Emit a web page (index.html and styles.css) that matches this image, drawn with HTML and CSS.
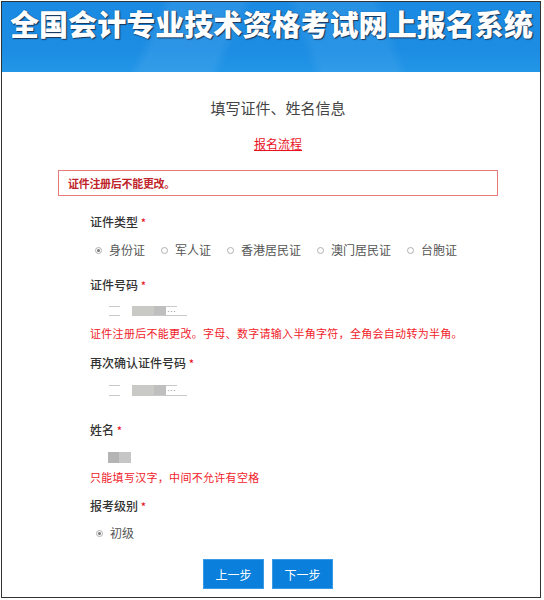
FILE: index.html
```html
<!DOCTYPE html>
<html lang="zh-CN">
<head>
<meta charset="utf-8">
<title>全国会计专业技术资格考试网上报名系统</title>
<link rel="stylesheet" href="styles.css">
</head>
<body>
<div class="frame">
  <header class="banner">
    <h1 class="banner-title">全国会计专业技术资格考试网上报名系统</h1>
  </header>
  <main class="main">
    <h2 class="page-title">填写证件、姓名信息</h2>
    <div class="flow"><a class="flow-link" href="#">报名流程</a></div>
    <div class="alert">证件注册后不能更改。</div>

    <div class="form">
      <div class="label lbl-type">证件类型 <span class="star">*</span></div>
      <div class="radios r-type">
        <span class="opt"><span class="radio checked"></span>身份证</span>
        <span class="opt"><span class="radio"></span>军人证</span>
        <span class="opt"><span class="radio"></span>香港居民证</span>
        <span class="opt"><span class="radio"></span>澳门居民证</span>
        <span class="opt"><span class="radio"></span>台胞证</span>
      </div>

      <div class="label lbl-id">证件号码 <span class="star">*</span></div>
      <div class="mask m-id">
        <span class="seg-a"></span>
        <span class="seg-b"><span class="blk"></span><span class="dots">…</span></span>
      </div>
      <div class="hint h-id">证件注册后不能更改。字母、数字请输入半角字符，全角会自动转为半角。</div>

      <div class="label lbl-id2">再次确认证件号码 <span class="star">*</span></div>
      <div class="mask m-id2">
        <span class="seg-a"></span>
        <span class="seg-b"><span class="blk"></span><span class="dots">…</span></span>
      </div>

      <div class="label lbl-name">姓名 <span class="star">*</span></div>
      <div class="name-mask"><span class="nb1"></span><span class="nb2"></span></div>
      <div class="hint h-name">只能填写汉字，中间不允许有空格</div>

      <div class="label lbl-level">报考级别 <span class="star">*</span></div>
      <div class="radios r-level">
        <span class="opt"><span class="radio checked"></span>初级</span>
      </div>

      <div class="actions">
        <button class="btn" type="button">上一步</button>
        <button class="btn" type="button">下一步</button>
      </div>
    </div>
  </main>
</div>
</body>
</html>
```

FILE: styles.css
```css
html, body {
  margin: 0;
  padding: 0;
  background: #fff;
}
body {
  font-family: "Noto Sans CJK SC", "Noto Sans", sans-serif;
  color: #333;
}
.frame {
  margin: 1px;
  width: 540px;
  height: 597px;
  box-sizing: border-box;
  border: 1px solid #333;
  overflow: hidden;
}
.banner {
  height: 70px;
  background:
    linear-gradient(115deg, rgba(255,255,255,0) 0%, rgba(255,255,255,0) 28%, rgba(255,255,255,0.07) 30%, rgba(255,255,255,0.07) 42%, rgba(255,255,255,0) 44%),
    linear-gradient(70deg, rgba(255,255,255,0) 55%, rgba(255,255,255,0.06) 57%, rgba(255,255,255,0.06) 70%, rgba(255,255,255,0) 72%),
    linear-gradient(180deg, #1a8ae2 0%, #1c8de3 70%, #2496e7 100%);
  padding-left: 8px;
  box-sizing: border-box;
}
.banner-title {
  margin: 0;
  padding-top: 3px;
  font-size: 29px;
  line-height: 36px;
  font-weight: 900;
  letter-spacing: 0.05px;
  color: #fff;
  white-space: nowrap;
  text-shadow: 0 0 1px #1c3b66, 1px 1px 1px #1d3556;
}
.main {
  margin-left: 56px;
  width: 440px;
}
.page-title {
  margin: 26px 0 0;
  font-size: 15px;
  line-height: 20px;
  font-weight: normal;
  text-align: center;
  color: #444;
}
.flow {
  margin-top: 18px;
  text-align: center;
  font-size: 12px;
  line-height: 16px;
}
.flow-link {
  color: #e8121f;
  text-decoration: underline;
}
.alert {
  margin-top: 18px;
  height: 26px;
  box-sizing: border-box;
  border: 1px solid #e77b7b;
  padding-left: 9px;
  line-height: 24px;
  font-size: 11px;
  font-weight: bold;
  letter-spacing: -0.3px;
  color: #c0242a;
}
.form {
  padding-left: 32px;
}
.label {
  font-size: 12px;
  line-height: 18px;
  color: #333;
  font-weight: 500;
}
.star {
  color: #e8121f;
  font-size: 11px;
}
.lbl-type { margin-top: 17px; }
.lbl-id { margin-top: 17px; }
.lbl-id2 { margin-top: 13px; }
.lbl-name { margin-top: 25px; }
.lbl-level { margin-top: 12px; }

.radios {
  display: flex;
  align-items: center;
  gap: 16px;
  padding-left: 5px;
  font-size: 12px;
  line-height: 18px;
  color: #555;
}
.r-type { margin-top: 10px; }
.r-level { margin-top: 9px; padding-left: 6px; }
.opt {
  display: flex;
  align-items: center;
}
.radio {
  width: 7px;
  height: 7px;
  box-sizing: border-box;
  border: 1px solid #b0b0b0;
  border-radius: 50%;
  margin-right: 7px;
  position: relative;
  background: #fff;
}
.radio.checked::after {
  content: "";
  position: absolute;
  left: 1px;
  top: 1px;
  width: 3px;
  height: 3px;
  border-radius: 50%;
  background: #777;
}

.mask {
  display: flex;
  height: 10px;
  padding-left: 19px;
}
.m-id { margin-top: 12px; }
.m-id2 { margin-top: 13px; height: 11px; }
.seg-a {
  width: 11px;
  box-sizing: border-box;
  border-top: 1px solid #c8c8c8;
  border-bottom: 1px solid #c8c8c8;
}
.seg-b {
  margin-left: 12px;
  width: 55px;
  display: flex;
  align-items: stretch;
  box-sizing: border-box;
  border-bottom: 1px solid #c8c8c8;
  background: linear-gradient(#c8c8c8, #c8c8c8) no-repeat 0 0 / 45px 1px;
}
.blk {
  width: 34px;
  background: linear-gradient(90deg, #c9c9c6 0%, #c9c9c6 64%, #bfbfbf 64%, #bfbfbf 100%);
}
.dots {
  font-size: 9px;
  line-height: 12px;
  color: #999;
  margin-left: 1px;
  letter-spacing: -1px;
}

.name-mask {
  display: flex;
  margin-top: 13px;
  padding-left: 18px;
  height: 11px;
}
.nb1 { width: 11px; background: #b4b4b4; }
.nb2 { width: 12px; background: #c6c6c6; }

.hint {
  font-size: 11px;
  line-height: 16px;
  color: #f0222a;
  white-space: nowrap;
  letter-spacing: 0.3px;
}
.h-id { margin-top: 9px; }
.h-name { margin-top: 6px; }

.actions {
  display: flex;
  gap: 8px;
  margin-top: 17px;
  padding-left: 113px;
}
.btn {
  width: 61px;
  height: 30px;
  padding: 0;
  border: 1px solid #3b9ae6;
  background: #0a7fdb;
  color: #fff;
  font-family: "Noto Sans CJK SC", sans-serif;
  font-size: 12px;
  cursor: pointer;
}
```
